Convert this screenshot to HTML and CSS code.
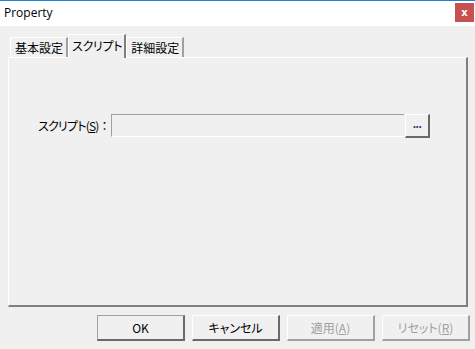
FILE: index.html
```html
<!DOCTYPE html>
<html lang="ja">
<head>
    <meta charset="UTF-8">
    <meta name="viewport" content="width=device-width, initial-scale=1.0">
    <title>Property</title>
    <link rel="stylesheet" href="styles.css">
</head>
<body>
    <div class="window">
        <header class="titlebar">
            <span class="title">Property</span>
            <button class="close">x</button>
        </header>

        <div class="dialog">
            <nav class="tabs">
                <div class="tab">基本設定</div>
                <div class="tab valgt">スクリプト</div>
                <div class="tab">詳細設定</div>
            </nav>

            <main class="panel">
                <div class="row">
                    <label class="label">スクリプト(<u>S</u>)<span class="colon">：</span></label>
                    <div class="field"></div>
                    <button class="browse">...</button>
                </div>
            </main>

            <footer class="buttons">
                <button class="knap">OK</button>
                <button class="knap">キャンセル</button>
                <button class="knap disabled">適用(<u>A</u>)</button>
                <button class="knap disabled">リセット(<u>R</u>)</button>
            </footer>
        </div>
    </div>
</body>
</html>
```

FILE: styles.css
```css
body{
    margin: 0;
    background-color: #f0f0f0;
    font-family: "Noto Sans CJK JP", "Noto Sans", sans-serif;
    font-size: 12px;
    color: #000;
}

.window{
    width: 475px;
    height: 349px;
    display: flex;
    flex-direction: column;
    overflow: hidden;
}

.titlebar{
    height: 25px;
    border-top: 1px solid #1883d7;
    background-color: #fff;
    display: flex;
    justify-content: space-between;
    align-items: flex-start;
}
.title{
    font-family: "Open Sans", "Noto Sans", sans-serif;
    font-size: 12px;
    margin: 3px 0 0 4px;
    color: #000;
}
.close{
    width: 19px;
    height: 19px;
    margin: 2px 1px 0 0;
    padding: 0;
    border: none;
    background-color: #c75050;
    color: #fff;
    font-family: "DejaVu Sans", sans-serif;
    font-weight: 700;
    font-size: 10px;
    line-height: 17px;
}

.dialog{
    flex: 1;
    display: flex;
    flex-direction: column;
    padding-top: 8px;
}

.tabs{
    display: flex;
    align-items: flex-end;
    margin-left: 10px;
    height: 23px;
    font-feature-settings: "palt";
}
.tab{
    height: 20px;
    padding: 0 3px 0 4px;
    box-sizing: border-box;
    border-top: 1px solid #fff;
    border-left: 1px solid #fff;
    border-right: 2px solid #a0a0a0;
    display: flex;
    align-items: center;
}
.tab.valgt{
    height: 24px;
    margin-bottom: -1px;
    padding: 0 2px 3px 3px;
    background-color: #f0f0f0;
    border-right-color: #808080;
    letter-spacing: -0.3px;
    position: relative;
    z-index: 1;
}

.panel{
    width: 460px;
    height: 250px;
    margin-left: 8px;
    box-sizing: border-box;
    border-top: 1px solid #fff;
    border-left: 1px solid #fff;
    border-right: 2px solid #808080;
    border-bottom: 2px solid #808080;
}

.row{
    display: flex;
    align-items: flex-start;
    margin-top: 56px;
    padding-left: 29px;
}
.label{
    width: 73px;
    height: 23px;
    line-height: 23px;
    font-feature-settings: "palt";
    letter-spacing: -0.8px;
    white-space: nowrap;
}
.colon{
    font-feature-settings: normal;
    letter-spacing: 0;
}
.field{
    width: 293px;
    height: 23px;
    box-sizing: border-box;
    border-top: 1px solid #a0a0a0;
    border-left: 1px solid #a0a0a0;
    border-bottom: 1px solid #fff;
    background-color: #f0f0f0;
}
.browse{
    width: 25px;
    height: 24px;
    margin-left: 1px;
    padding: 0 0 3px;
    box-sizing: border-box;
    border-top: 1px solid #fff;
    border-left: 1px solid #fff;
    border-right: 2px solid #696969;
    border-bottom: 2px solid #696969;
    background-color: #f0f0f0;
    font-family: "Liberation Sans", sans-serif;
    font-size: 12px;
    font-weight: 700;
    color: #1c3f6e;
    letter-spacing: -0.5px;
}

.buttons{
    display: flex;
    gap: 7px;
    margin: 8px 0 0 97px;
}
.knap{
    width: 88px;
    height: 26px;
    padding: 0;
    box-sizing: border-box;
    border-top: 1px solid #fff;
    border-left: 1px solid #fff;
    border-right: 2px solid #696969;
    border-bottom: 2px solid #696969;
    background-color: #f0f0f0;
    font-family: "Noto Sans CJK JP", "Noto Sans", sans-serif;
    font-size: 12px;
    color: #000;
    font-feature-settings: "palt";
}
.knap:first-child{
    border-top-color: #a0a0a0;
    border-left-color: #a0a0a0;
}
.knap.disabled{
    color: #a0a0a0;
    border-right-color: #a0a0a0;
    border-bottom-color: #a0a0a0;
}
```
